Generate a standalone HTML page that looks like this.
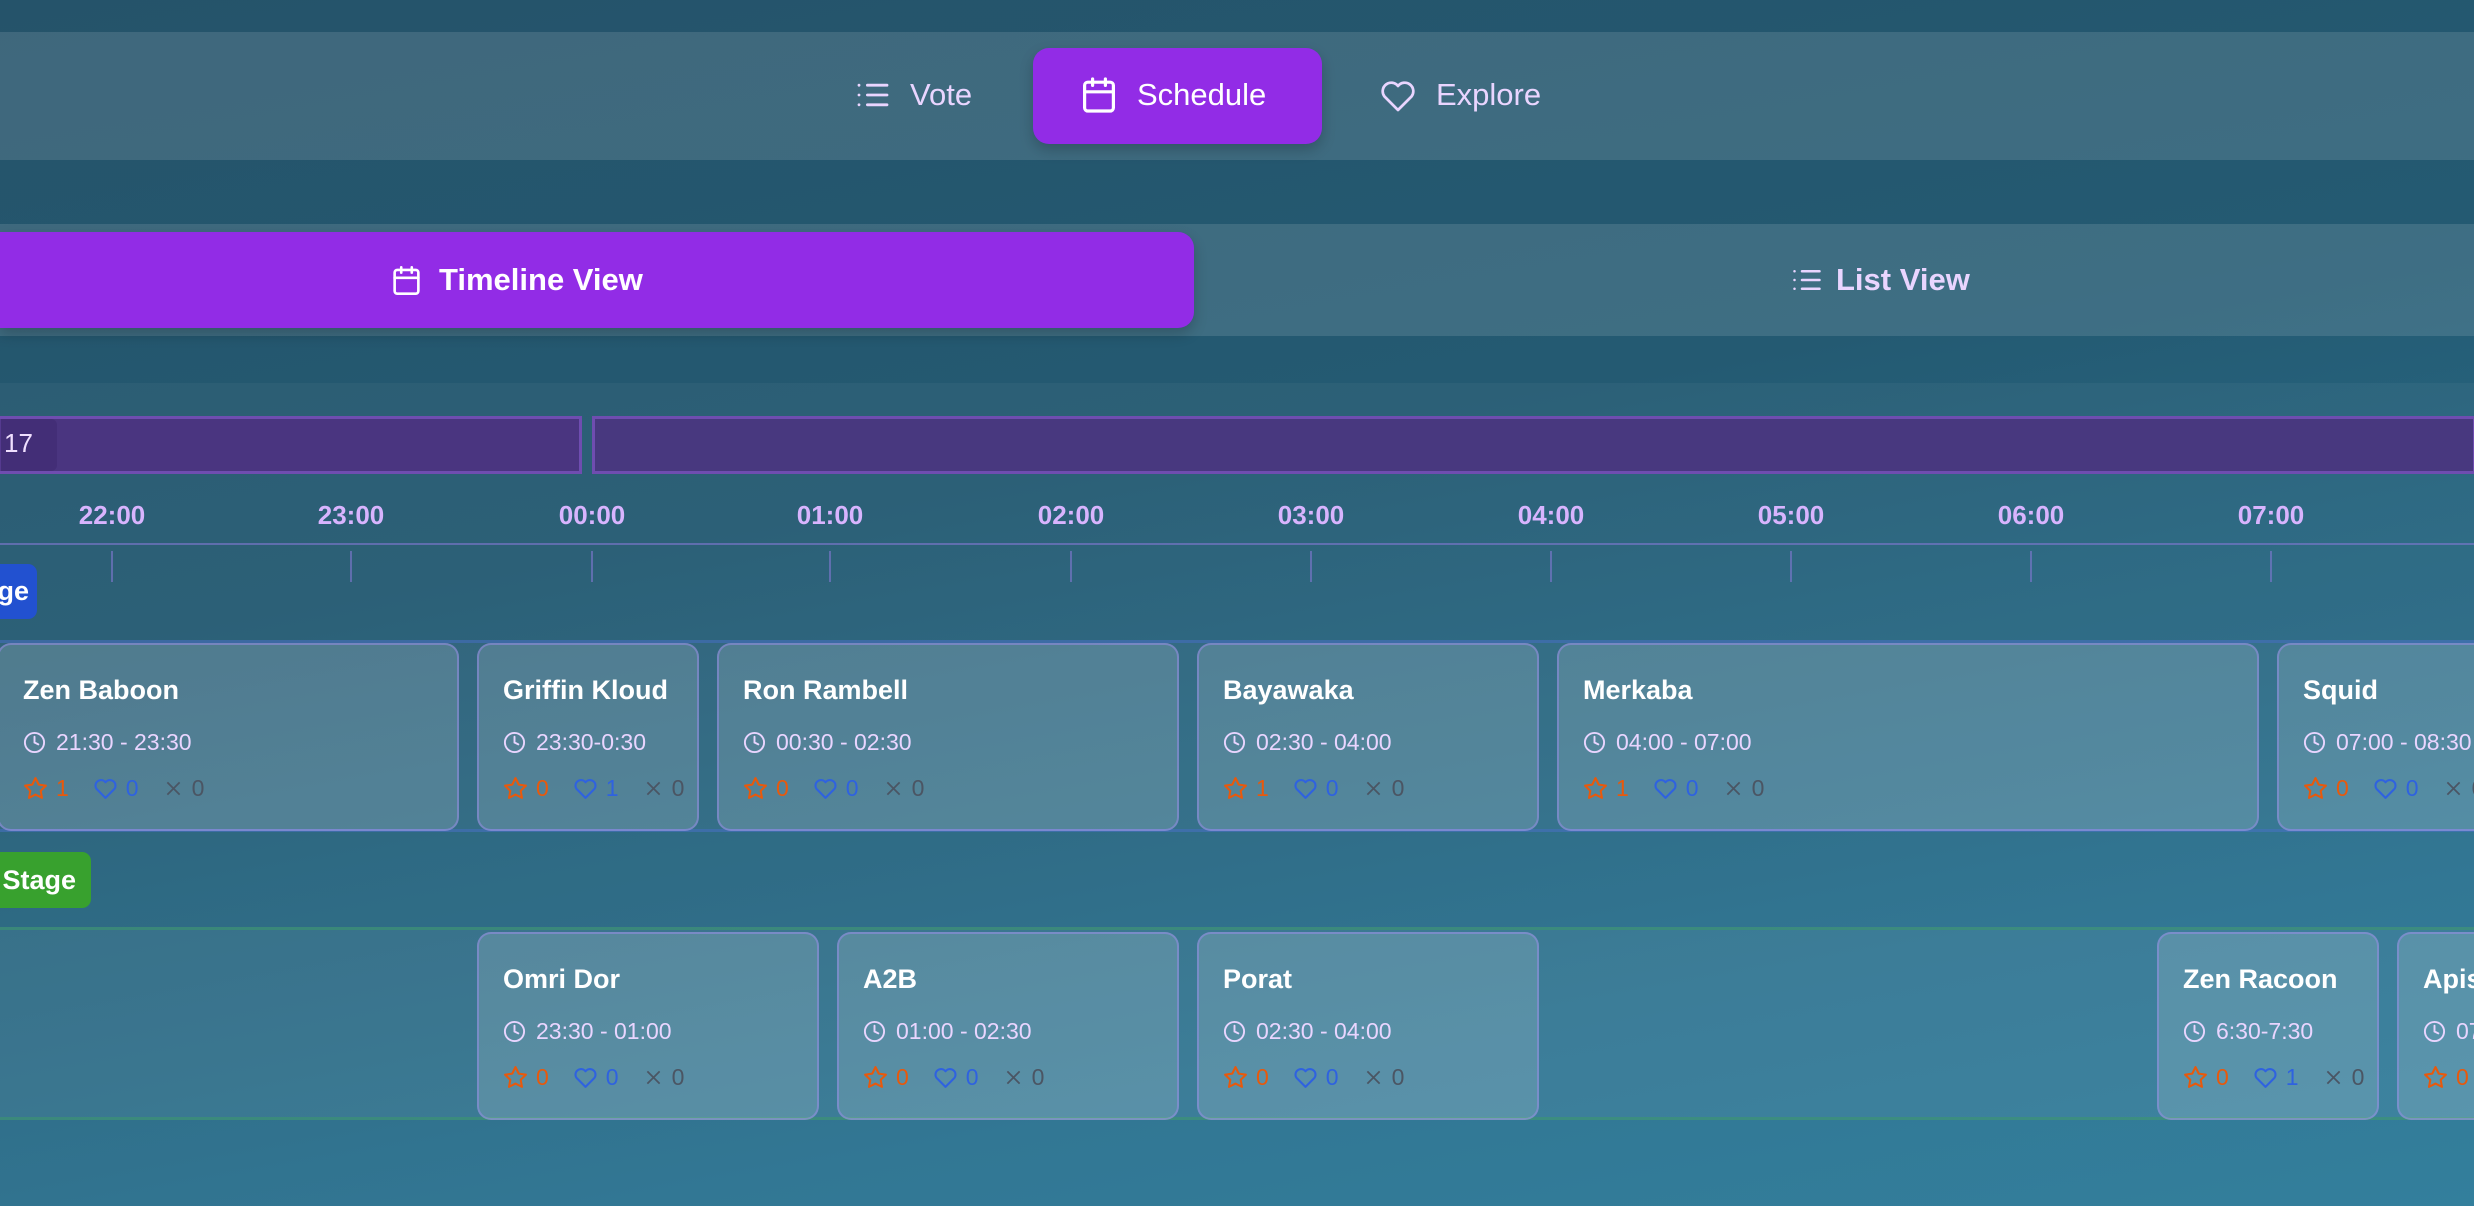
<!DOCTYPE html>
<html><head><meta charset="utf-8"><style>
*{margin:0;padding:0;box-sizing:border-box}
html{overflow:hidden}
body{width:2474px;height:1206px;overflow:hidden;position:relative;font-family:"Liberation Sans",sans-serif;background:linear-gradient(170deg,#25536a 0%,#245a72 40%,#2a7290 80%,#2b7a98 100%)}
.a{position:absolute}
.band{position:absolute;left:0;width:2474px;background:rgba(255,255,255,0.12)}
.nav{display:flex;align-items:center;gap:14px;font-size:31px;color:#e9d5ff}
.card{position:absolute;border:2px solid rgba(150,140,230,0.55);border-radius:14px;background:rgba(255,255,255,0.15);overflow:hidden}
.card .t{position:absolute;left:24px;top:30px;font-size:27px;font-weight:bold;color:#fff;white-space:nowrap}
.card .tm{position:absolute;left:24px;top:84px;font-size:23px;color:#e9d5ff;white-space:nowrap;display:flex;align-items:center;gap:10px}
.card .v{position:absolute;left:24px;top:130px;font-size:23px;white-space:nowrap;display:flex;align-items:center}
.v span{display:flex;align-items:center;gap:8px;margin-right:24px}
.hr{position:absolute;top:500px;font-size:26px;color:#d8b4fe;transform:translateX(-50%);font-weight:bold}
.tick{position:absolute;top:551px;width:2px;height:31px;background:rgba(130,120,210,0.6)}
#wrap{position:absolute;left:0;top:0;width:2474px;height:1206px;overflow:hidden}
</style></head><body><div id="wrap">
<div class="band" style="top:32px;height:128px"></div>
<div class="band" style="top:224px;height:112px"></div>
<div class="band" style="top:383px;height:823px;background:rgba(255,255,255,0.04)"></div>

<div class="a nav" style="left:856px;top:77px">
<svg width="34" height="28" viewBox="0 0 24 20" fill="none" stroke="#e9d5ff" stroke-width="2" stroke-linecap="round"><path d="M8 3h14M8 10h14M8 17h14M2 3h.01M2 10h.01M2 17h.01"/></svg><span style="margin-left:6px">Vote</span></div>
<div class="a" style="left:1033px;top:48px;width:289px;height:96px;background:#922ce6;border-radius:16px;box-shadow:0 6px 14px rgba(0,0,0,0.2)"></div>
<div class="a nav" style="left:1083px;top:77px;color:#fff">
<svg width="32" height="36" viewBox="0 0 20 22" fill="none" stroke="#fff" stroke-width="2" stroke-linecap="round"><rect x="1" y="3" width="18" height="18" rx="2"/><path d="M6 1v4M14 1v4M1 9h18"/></svg><span style="margin-left:8px">Schedule</span></div>
<div class="a nav" style="left:1380px;top:77px">
<svg width="36" height="34" viewBox="0 0 24 22" fill="none" stroke="#e9d5ff" stroke-width="1.8" stroke-linejoin="round"><path d="M12 21L3 12a5.5 5.5 0 0 1 9-7a5.5 5.5 0 0 1 9 7z"/></svg><span style="margin-left:6px">Explore</span></div>

<div class="a" style="left:0;top:232px;width:1194px;height:96px;background:#922ce6;border-radius:0 16px 16px 0;box-shadow:0 6px 14px rgba(0,0,0,0.2)"></div>
<div class="a nav" style="left:392px;top:262px;color:#fff;font-weight:bold">
<svg width="29" height="29" viewBox="0 0 20 22" fill="none" stroke="#fff" stroke-width="2" stroke-linecap="round"><rect x="1" y="3" width="18" height="18" rx="2"/><path d="M6 1v4M14 1v4M1 9h18"/></svg><span style="margin-left:4px">Timeline View</span></div>
<div class="a nav" style="left:1792px;top:262px;font-weight:bold">
<svg width="30" height="26" viewBox="0 0 24 20" fill="none" stroke="#e9d5ff" stroke-width="2" stroke-linecap="round"><path d="M8 3h14M8 10h14M8 17h14M2 3h.01M2 10h.01M2 17h.01"/></svg><span>List View</span></div>

<div class="a" style="left:-2px;top:416px;width:584px;height:58px;background:#4a3580;border:3px solid #6f4db0"></div>
<div class="a" style="left:0;top:419px;width:57px;height:52px;background:rgba(60,40,110,0.5);border-radius:0 6px 6px 0"></div>
<div class="a" style="left:592px;top:416px;width:1884px;height:58px;background:#48387f;border:3px solid #6f4db0"></div>
<div class="a" style="left:4px;top:428px;font-size:26px;color:#f0e0ff">17</div>

<div class="hr" style="left:112px">22:00</div><div class="hr" style="left:351px">23:00</div><div class="hr" style="left:592px">00:00</div><div class="hr" style="left:830px">01:00</div><div class="hr" style="left:1071px">02:00</div><div class="hr" style="left:1311px">03:00</div><div class="hr" style="left:1551px">04:00</div><div class="hr" style="left:1791px">05:00</div><div class="hr" style="left:2031px">06:00</div><div class="hr" style="left:2271px">07:00</div>
<div class="a" style="left:0;top:543px;width:2474px;height:2px;background:rgba(130,120,210,0.6)"></div>
<div class="tick" style="left:111px"></div><div class="tick" style="left:350px"></div><div class="tick" style="left:591px"></div><div class="tick" style="left:829px"></div><div class="tick" style="left:1070px"></div><div class="tick" style="left:1310px"></div><div class="tick" style="left:1550px"></div><div class="tick" style="left:1790px"></div><div class="tick" style="left:2030px"></div><div class="tick" style="left:2270px"></div>

<div class="a" style="left:-80px;top:564px;width:117px;height:55px;background:#2251d0;border-radius:9px;color:#fff;font-weight:bold;font-size:27px;line-height:55px;text-align:right;padding-right:8px">Stage</div>
<div class="a" style="left:-60px;top:852px;width:151px;height:56px;background:#38a12e;border-radius:9px;color:#fff;font-weight:bold;font-size:27px;line-height:56px;text-align:right;padding-right:15px">Stage</div>

<div class="a" style="left:0;top:640px;width:2474px;height:192px;background:rgba(255,255,255,0.03);border-top:3px solid rgba(70,110,200,0.5);border-bottom:3px solid rgba(70,110,200,0.5)"></div>
<div class="a" style="left:0;top:927px;width:2474px;height:193px;background:rgba(255,255,255,0.05);border-top:3px solid rgba(60,150,110,0.6);border-bottom:3px solid rgba(60,150,110,0.6)"></div>

<svg width="0" height="0" style="position:absolute"><defs>
<symbol id="clk" viewBox="0 0 24 24"><circle cx="12" cy="12" r="10" fill="none" stroke="#e9d5ff" stroke-width="2"/><path d="M12 6v6l4 2" fill="none" stroke="#e9d5ff" stroke-width="2" stroke-linecap="round"/></symbol>
<symbol id="str" viewBox="0 0 24 24"><path d="M12 2l3.1 6.3 6.9 1-5 4.9 1.2 6.8L12 17.8 5.8 21l1.2-6.8-5-4.9 6.9-1z" fill="none" stroke="#e8590c" stroke-width="2" stroke-linejoin="round"/></symbol>
<symbol id="hrt" viewBox="0 0 24 24"><path d="M12 21L3.5 12.5a5 5 0 0 1 8.5-6.5a5 5 0 0 1 8.5 6.5z" fill="none" stroke="#2f62e0" stroke-width="2" stroke-linejoin="round"/></symbol>
<symbol id="xx" viewBox="0 0 24 24"><path d="M5 5l14 14M19 5L5 19" stroke="#4b5563" stroke-width="2"/></symbol>
</defs></svg>

<div id="cards"></div>
</div>
<script>
var rows=[[643,[["Zen Baboon",-2.5,2,"21:30 - 23:30",1,0,0],["Griffin Kloud",-0.5,1,"23:30-0:30",0,1,0],["Ron Rambell",0.5,2,"00:30 - 02:30",0,0,0],["Bayawaka",2.5,1.5,"02:30 - 04:00",1,0,0],["Merkaba",4,3,"04:00 - 07:00",1,0,0],["Squid",7,1.5,"07:00 - 08:30",0,0,0]]],
[932,[["Omri Dor",-0.5,1.5,"23:30 - 01:00",0,0,0],["A2B",1,1.5,"01:00 - 02:30",0,0,0],["Porat",2.5,1.5,"02:30 - 04:00",0,0,0],["Zen Racoon",6.5,1,"6:30-7:30",0,1,0],["Apis",7.5,1,"07:30 - 08:30",0,0,0]]]];
var h="";
rows.forEach(function(r){r[1].forEach(function(c){
var x=592+240*c[1]+5,w=240*c[2]-18;
if(x+w>2474)w=2474-x+20;
h+='<div class="card" style="left:'+x+'px;top:'+r[0]+'px;width:'+w+'px;height:188px"><div class="t">'+c[0]+'</div><div class="tm"><svg width="23" height="23"><use href="#clk"/></svg>'+c[3]+'</div><div class="v"><span style="color:#e8590c"><svg width="25" height="25"><use href="#str"/></svg>'+c[4]+'</span><span style="color:#2f62e0"><svg width="25" height="25"><use href="#hrt"/></svg>'+c[5]+'</span><span style="color:#4b5563"><svg width="21" height="21"><use href="#xx"/></svg>'+c[6]+'</span></div></div>';
});});
document.getElementById("cards").innerHTML=h;
</script>
</body></html>
